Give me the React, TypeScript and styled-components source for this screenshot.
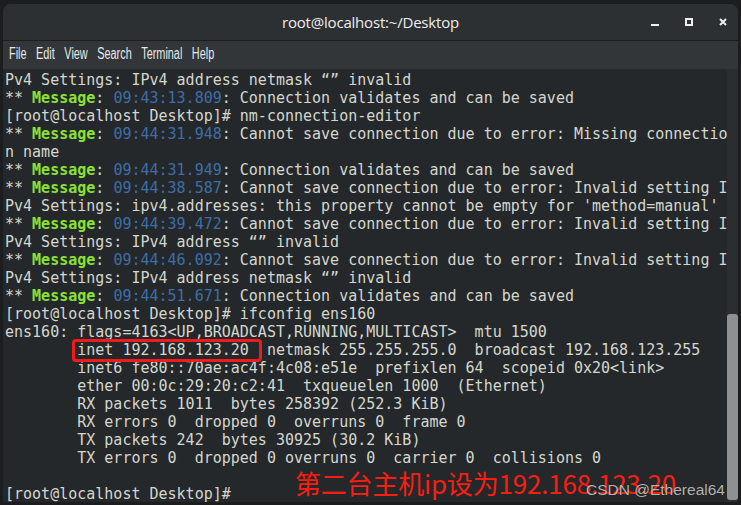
import React from "react";
import styled, { createGlobalStyle } from "styled-components";

const GlobalStyle = createGlobalStyle`
  html, body {
    margin: 0;
    padding: 0;
    background: #1c1d1e;
  }
`;

const Screen = styled.div`
  width: 741px;
  height: 505px;
  box-sizing: border-box;
  padding: 4px 3px 3px 3px;
  background: #1c1d1e;
  overflow: hidden;
`;

const Window = styled.div`
  display: flex;
  flex-direction: column;
  height: 100%;
  border-radius: 8px 8px 0 0;
  overflow: hidden;
  background: #25282a;
`;

const TitleBar = styled.div`
  position: relative;
  display: flex;
  align-items: center;
  justify-content: center;
  height: 36px;
  flex-shrink: 0;
  background: #2d3033;
  border-bottom: 1px solid #1b1d1e;
  font-family: "Open Sans", "DejaVu Sans", sans-serif;
  font-size: 15px;
  color: #eeeeec;
`;

const Title = styled.span`
  letter-spacing: -0.2px;
`;

const Controls = styled.div`
  position: absolute;
  right: 11px;
  top: 14px;
  display: flex;
  align-items: flex-end;
  gap: 26px;
  height: 8px;
`;

const MinButton = styled.span`
  width: 8px;
  height: 2px;
  background: #eeeeec;
`;

const MaxButton = styled.span`
  width: 8px;
  height: 8px;
  box-sizing: border-box;
  border: 2px solid #eeeeec;
`;

const CloseButton = styled.svg`
  width: 8px;
  height: 8px;
`;

const MenuBar = styled.div`
  display: flex;
  align-items: center;
  height: 28px;
  flex-shrink: 0;
  padding-left: 6px;
  padding-bottom: 2px;
  box-sizing: border-box;
  background: #323639;
`;

const MenuList = styled.div`
  display: flex;
  gap: 14px;
  transform: scaleX(0.68);
  transform-origin: left center;
  font-family: "Liberation Sans", Arial, sans-serif;
  font-size: 16px;
  color: #e8e8e6;
`;

const MenuItem = styled.span``;

const Body = styled.div`
  display: flex;
  flex: 1;
  min-height: 0;
`;

const TermArea = styled.div`
  position: relative;
  flex: 1;
  padding: 2px 0 0 2px;
  font-family: "DejaVu Sans Mono", monospace;
  font-size: 15px;
  line-height: 18px;
  color: #d3d7cf;
  white-space: pre;
  overflow: hidden;
`;

const Line = styled.div`
  height: 18px;
`;

const Tag = styled.span`
  color: #8ae234;
  font-weight: bold;
`;

const Stamp = styled.span`
  color: #3d6ea8;
`;

const Gutter = styled.div`
  display: flex;
  justify-content: center;
  width: 11px;
  flex-shrink: 0;
  background: #2b2e30;
  padding-top: 245px;
  padding-bottom: 2px;
`;

const Thumb = styled.div`
  width: 5px;
  flex: 1;
  border-radius: 3px;
  background: #8e9091;
`;

const Highlight = styled.div`
  position: absolute;
  left: 69px;
  top: 270px;
  width: 190px;
  height: 23px;
  box-sizing: border-box;
  border: 3px solid #f21b1b;
  border-radius: 4px;
`;

const Note = styled.div`
  position: absolute;
  left: 292px;
  top: 399px;
  font-family: "Noto Sans CJK SC", "Noto Sans", sans-serif;
  font-size: 26px;
  line-height: 30px;
  color: #fa1e12;
  letter-spacing: -0.2px;
`;

const Watermark = styled.div`
  position: absolute;
  left: 583px;
  top: 412px;
  font-family: "Liberation Sans", Arial, sans-serif;
  font-size: 15.5px;
  line-height: 18px;
  color: rgba(225, 225, 225, 0.78);
  text-shadow: 0 0 1px rgba(0, 0, 0, 0.6);
`;

type Seg = { t: string; kind?: "tag" | "stamp" };

const msg = (time: string, rest: string): Seg[] => [
  { t: "** " },
  { t: "Message", kind: "tag" },
  { t: ": " },
  { t: time, kind: "stamp" },
  { t: ": " + rest },
];

const plain = (t: string): Seg[] => [{ t }];

const lines: Seg[][] = [
  plain("Pv4 Settings: IPv4 address netmask \u201c\u201d invalid"),
  msg("09:43:13.809", "Connection validates and can be saved"),
  plain("[root@localhost Desktop]# nm-connection-editor"),
  msg("09:44:31.948", "Cannot save connection due to error: Missing connectio"),
  plain("n name"),
  msg("09:44:31.949", "Connection validates and can be saved"),
  msg("09:44:38.587", "Cannot save connection due to error: Invalid setting I"),
  plain("Pv4 Settings: ipv4.addresses: this property cannot be empty for 'method=manual'"),
  msg("09:44:39.472", "Cannot save connection due to error: Invalid setting I"),
  plain("Pv4 Settings: IPv4 address \u201c\u201d invalid"),
  msg("09:44:46.092", "Cannot save connection due to error: Invalid setting I"),
  plain("Pv4 Settings: IPv4 address netmask \u201c\u201d invalid"),
  msg("09:44:51.671", "Connection validates and can be saved"),
  plain("[root@localhost Desktop]# ifconfig ens160"),
  plain("ens160: flags=4163<UP,BROADCAST,RUNNING,MULTICAST>  mtu 1500"),
  plain("        inet 192.168.123.20  netmask 255.255.255.0  broadcast 192.168.123.255"),
  plain("        inet6 fe80::70ae:ac4f:4c08:e51e  prefixlen 64  scopeid 0x20<link>"),
  plain("        ether 00:0c:29:20:c2:41  txqueuelen 1000  (Ethernet)"),
  plain("        RX packets 1011  bytes 258392 (252.3 KiB)"),
  plain("        RX errors 0  dropped 0  overruns 0  frame 0"),
  plain("        TX packets 242  bytes 30925 (30.2 KiB)"),
  plain("        TX errors 0  dropped 0 overruns 0  carrier 0  collisions 0"),
  plain(""),
  plain("[root@localhost Desktop]#"),
];

const renderSeg = (s: Seg, i: number) => {
  if (s.kind === "tag") return <Tag key={i}>{s.t}</Tag>;
  if (s.kind === "stamp") return <Stamp key={i}>{s.t}</Stamp>;
  return <span key={i}>{s.t}</span>;
};

const App = () => {
  return (
    <>
      <GlobalStyle />
      <Screen>
        <Window>
          <TitleBar>
            <Title>root@localhost:~/Desktop</Title>
            <Controls>
              <MinButton />
              <MaxButton />
              <CloseButton viewBox="0 0 8 8">
                <path d="M1 1 L7 7 M7 1 L1 7" stroke="#eeeeec" strokeWidth="2" />
              </CloseButton>
            </Controls>
          </TitleBar>
          <MenuBar>
            <MenuList>
              {["File", "Edit", "View", "Search", "Terminal", "Help"].map((m) => (
                <MenuItem key={m}>{m}</MenuItem>
              ))}
            </MenuList>
          </MenuBar>
          <Body>
            <TermArea>
              {lines.map((segs, i) => (
                <Line key={i}>{segs.map(renderSeg)}</Line>
              ))}
              <Highlight />
              <Note>第二台主机ip设为192.168.123.20</Note>
              <Watermark>CSDN @Ethereal64</Watermark>
            </TermArea>
            <Gutter>
              <Thumb />
            </Gutter>
          </Body>
        </Window>
      </Screen>
    </>
  );
};

export default App;
